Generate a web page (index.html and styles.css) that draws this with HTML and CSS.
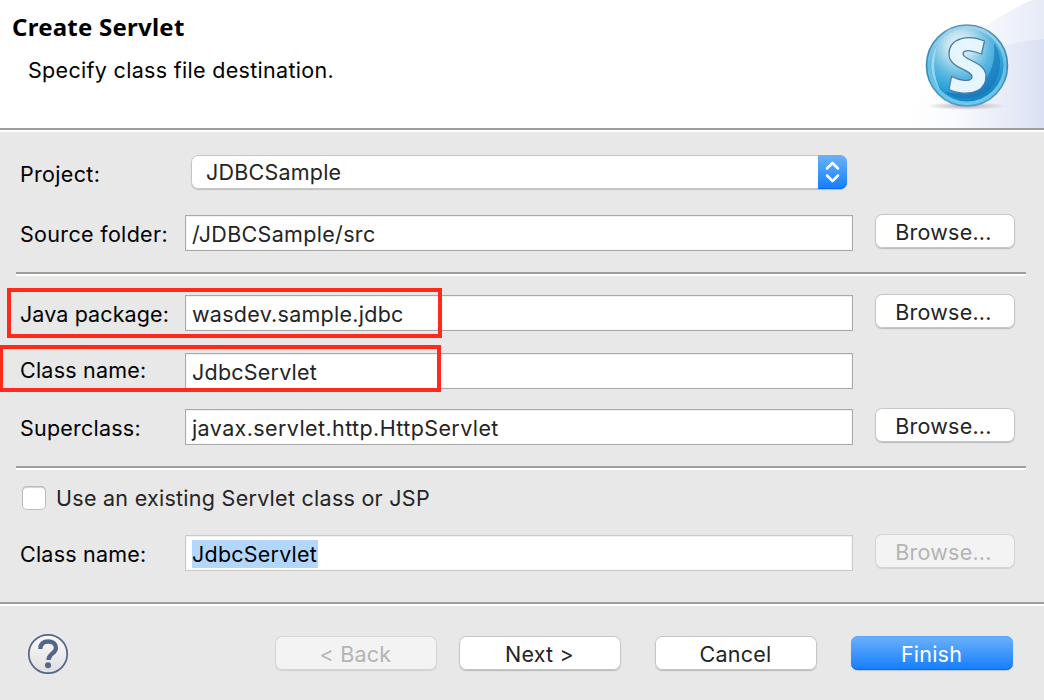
FILE: index.html
```html
<!DOCTYPE html>
<html lang="en">
<head>
<meta charset="utf-8">
<title>Create Servlet</title>
<link rel="stylesheet" href="styles.css">
</head>
<body>
<main class="dialog">
  <header class="header">
    <div class="heading">
      <h1 class="title">Create Servlet</h1>
      <p class="subtitle">Specify class file destination.</p>
    </div>
    <svg class="banner" width="200" height="128" viewBox="0 0 200 128" aria-hidden="true">
      <defs>
        <linearGradient id="sweep" x1="0" x2="1"><stop offset="0" stop-color="#fff"/><stop offset=".45" stop-color="#fbfcfe"/><stop offset="1" stop-color="#e6ebf7"/></linearGradient>
        <linearGradient id="sweep2" x1="0" x2="1"><stop offset="0" stop-color="#fff"/><stop offset=".35" stop-color="#fafbfe"/><stop offset=".7" stop-color="#e9edf8"/><stop offset="1" stop-color="#dae1f4"/></linearGradient>
        <radialGradient id="orb" cx=".4" cy=".24" r=".76"><stop offset="0" stop-color="#f4fafc"/><stop offset=".25" stop-color="#bfe2f0"/><stop offset=".55" stop-color="#5db8df"/><stop offset=".8" stop-color="#2ba3d9"/><stop offset="1" stop-color="#1684c2"/></radialGradient>
        <linearGradient id="rim" x1="0" y1="0" x2="0" y2="1"><stop offset="0" stop-color="#5c93bd"/><stop offset=".5" stop-color="#3a86b5"/><stop offset="1" stop-color="#4a9fcd"/></linearGradient>
        <linearGradient id="halo" x1="0" y1="0" x2="0" y2="1"><stop offset="0" stop-color="#a6d6ea"/><stop offset=".5" stop-color="#63bfe3"/><stop offset="1" stop-color="#70c8ea"/></linearGradient>
        <radialGradient id="shade"><stop offset="0" stop-color="#a894ab" stop-opacity=".8"/><stop offset="1" stop-color="#a894ab" stop-opacity="0"/></radialGradient>
      </defs>
      <path d="M58 128C75 83 120 30 188 0H200V128Z" fill="url(#sweep)"/>
      <path d="M58 128C82 84 130 44 200 39V128Z" fill="url(#sweep2)"/>
      <ellipse cx="122" cy="106" rx="40" ry="4" fill="url(#shade)"/>
      <circle cx="123" cy="65.500" r="40.500" fill="url(#halo)" stroke="url(#rim)" stroke-width="1.600"/>
      <circle cx="123" cy="65" r="36.500" fill="url(#orb)"/>
      <path d="M150 43C161 58 157 84 139 94C125 101 110 99 101 92C121 97 154 87 150 43Z" fill="#1670b5" opacity=".6"/>
      <path d="M93 46C84 60 86 78 96 90C90 76 88 63 93 46Z" fill="#c9eefa" opacity=".6"/>
      <path d="M140.500 41L137.500 54C132 51.500 119 48 119 54C119 60 142 62 142 76C142 91 128 94 117 93C112 92.500 108 91 105 89.500L107.500 76.500C114 80 128 83 128 77C128 69 105 69 105 54C105 38 124 34 140.500 41Z" fill="#e6f6ff" stroke="#4c7ba8" stroke-width="1.300" stroke-linejoin="round"/>
    </svg>
  </header>

  <form class="form">
    <section class="group">
      <div class="row row-project">
        <span class="label t-wide">Project:</span>
        <div class="combo">
          <span class="combo-text">JDBCSample</span>
          <span class="combo-arrows">
            <svg width="29" height="34" viewBox="0 0 29 34" fill="none" stroke="#fff" stroke-width="2.500" stroke-linecap="round" stroke-linejoin="round"><path d="M9 13.500L14.500 8L20 13.500M9 20.500L14.500 26L20 20.500"/></svg>
          </span>
        </div>
      </div>
      <div class="row">
        <span class="label t-wide">Source folder:</span>
        <div class="field t-wide">/JDBCSample/src</div>
        <button type="button" class="button browse">Browse...</button>
      </div>
    </section>

    <section class="group group-class">
      <div class="row">
        <span class="label t-tight">Java package:</span>
        <div class="field t-package">wasdev.sample.jdbc</div>
        <button type="button" class="button browse">Browse...</button>
        <span class="mark mark-package"></span>
      </div>
      <div class="row row-name">
        <span class="label label-high">Class name:</span>
        <div class="field">JdbcServlet</div>
        <span class="mark mark-class"></span>
      </div>
      <div class="row row-super">
        <span class="label">Superclass:</span>
        <div class="field t-qualified">javax.servlet.http.HttpServlet</div>
        <button type="button" class="button browse">Browse...</button>
      </div>
    </section>

    <section class="group group-existing">
      <label class="check"><span class="box"></span><span class="t-package">Use an existing Servlet class or JSP</span></label>
      <div class="row">
        <span class="label">Class name:</span>
        <div class="field field-dim"><span class="selected">JdbcServlet</span></div>
        <button type="button" class="button browse disabled">Browse...</button>
      </div>
    </section>
  </form>

  <footer class="footer">
    <svg class="help" width="42" height="42" viewBox="0 0 42 42" role="img" aria-label="Help">
      <defs><linearGradient id="helpfill" x1="0" y1="0" x2="0" y2="1"><stop offset="0" stop-color="#fafafa"/><stop offset="1" stop-color="#dedede"/></linearGradient></defs>
      <circle cx="21" cy="21" r="19.200" fill="url(#helpfill)" stroke="#536688" stroke-width="1.700"/>
      <path d="M13.300 16C13.500 10.500 17 8.500 21.300 8.500C26 8.500 29 11 29 15C29 20.500 21.500 20.500 21.500 27" fill="none" stroke="#536688" stroke-width="4.300"/>
      <circle cx="21" cy="32.300" r="3" fill="#536688"/>
    </svg>
    <button type="button" class="button nav disabled">&lt; Back</button>
    <button type="button" class="button nav">Next &gt;</button>
    <button type="button" class="button nav nav-cancel">Cancel</button>
    <button type="button" class="button nav nav-cancel primary">Finish</button>
  </footer>
</main>
</body>
</html>
```
FILE: styles.css
```css
* { box-sizing: border-box; }
body {
  margin: 0;
  background: #e8e8e8;
  color: #000;
  font: 21.500px/36px Inter, "Liberation Sans", sans-serif;
  letter-spacing: .22px;
}
.t-tight { letter-spacing: .1px; }
.t-package { letter-spacing: .27px; }
.t-wide { letter-spacing: .32px; }
.t-qualified { letter-spacing: .4px; }
.dialog { display: flex; flex-direction: column; width: 1044px; height: 700px; overflow: hidden; white-space: nowrap; }

.header {
  display: flex;
  justify-content: space-between;
  height: 132px;
  background: #fff;
  border-bottom: 2px solid #fff;
  box-shadow: inset 0 -2px #9e9e9e;
}
.heading { padding: 9px 0 0 12px; }
.title { margin: 0; font: bold 24px/36px "Noto Sans", sans-serif; letter-spacing: .24px; }
.subtitle { margin: 7px 0 0 16px; letter-spacing: .31px; }
.banner { display: block; }

.form { height: 470px; }
.group { margin: 0 18px 0 16px; height: 144px; padding-top: 23px; border-bottom: 2px solid #fff; box-shadow: inset 0 -2px #9e9e9e; }
.group-class { height: 194px; padding-top: 19px; }
.group-existing { height: 132px; padding-top: 10px; border: 0; box-shadow: none; }
.row { position: relative; display: flex; height: 36px; }
.row-project { margin-bottom: 24px; }
.row-name { margin-top: 22px; }
.row-super { margin-top: 20px; }
.label { width: 169px; padding: 1px 0 0 4px; }
.label-high { padding-top: 0; line-height: 34px; }

.field {
  width: 668px;
  padding: 0 0 0 6px;
  border: 1px solid #a9a9a9;
  box-shadow: inset 0 1px #f0f0f0, inset 0 0 0 1px #f7f7f7;
  background: #fff;
  color: #242424;
}
.field-dim { border-color: #cbcbcb; }
.selected { display: inline-block; height: 28px; margin-top: 4px; padding-right: 1px; line-height: 28px; background: #b2d7ff; color: #000; vertical-align: top; }

.combo {
  display: flex;
  justify-content: space-between;
  width: 656px;
  height: 34px;
  margin-left: 6px;
  border-radius: 7px;
  background: #fff;
  color: #242424;
  box-shadow: inset 0 0 0 1px #c6c6c6, 0 1px 1px #bdbdbd;
}
.combo-text { padding-left: 15px; line-height: 35px; }
.combo-arrows { width: 29px; height: 34px; border-radius: 0 7px 7px 0; background: linear-gradient(#6bb2f9, #147dff); box-shadow: inset 0 -1px #0d68ee; }
.combo-arrows svg { display: block; }

.button {
  height: 34px;
  padding: 0;
  border: 0;
  border-radius: 7px;
  background: #fff;
  color: #242424;
  font: inherit;
  letter-spacing: inherit;
  line-height: 36px;
  box-shadow: inset 0 0 0 1px #c6c6c6, 0 1px 1px #b9b9b9;
}
.browse { width: 140px; margin: -1px 0 0 22px; padding-right: 3px; }
.disabled { background: #f3f3f3; color: #b4b4b4; box-shadow: inset 0 0 0 1px #d4d4d4, 0 1px 1px #d0d0d0; }
.primary { background: linear-gradient(#6bb2f9, #147dff); color: #fff; box-shadow: inset 0 1px #5ba4f5, inset 0 -1px #0d68ee, 0 1px 1px #bbc4d3; }

.check { display: flex; align-items: center; gap: 10px; height: 36px; margin: 0 0 19px 6px; color: #242424; }
.box { width: 24px; height: 24px; margin-top: -1px; border-radius: 5px; background: #fff; box-shadow: inset 0 0 0 1px #bcbcbc, inset 0 2px 1px #d0d0d0; }

/* Highlight frames drawn over the rows they call out. */
.mark { position: absolute; border: 4px solid #ff2a1c; }
.mark-package { left: -9px; top: -7px; width: 435px; height: 50px; }
.mark-class { left: -17px; top: -8px; width: 442px; height: 47px; }

.footer { display: flex; height: 98px; padding: 32px 31px 0 27px; border-top: 2px solid #9e9e9e; box-shadow: inset 0 2px #fff; }
.help { display: block; margin: -3px 206px 0 0; }
.nav { width: 162px; margin-right: 22px; padding-right: 1px; }
.nav-cancel { margin-left: 12px; }
.nav-cancel.primary { margin-right: 0; }
```
